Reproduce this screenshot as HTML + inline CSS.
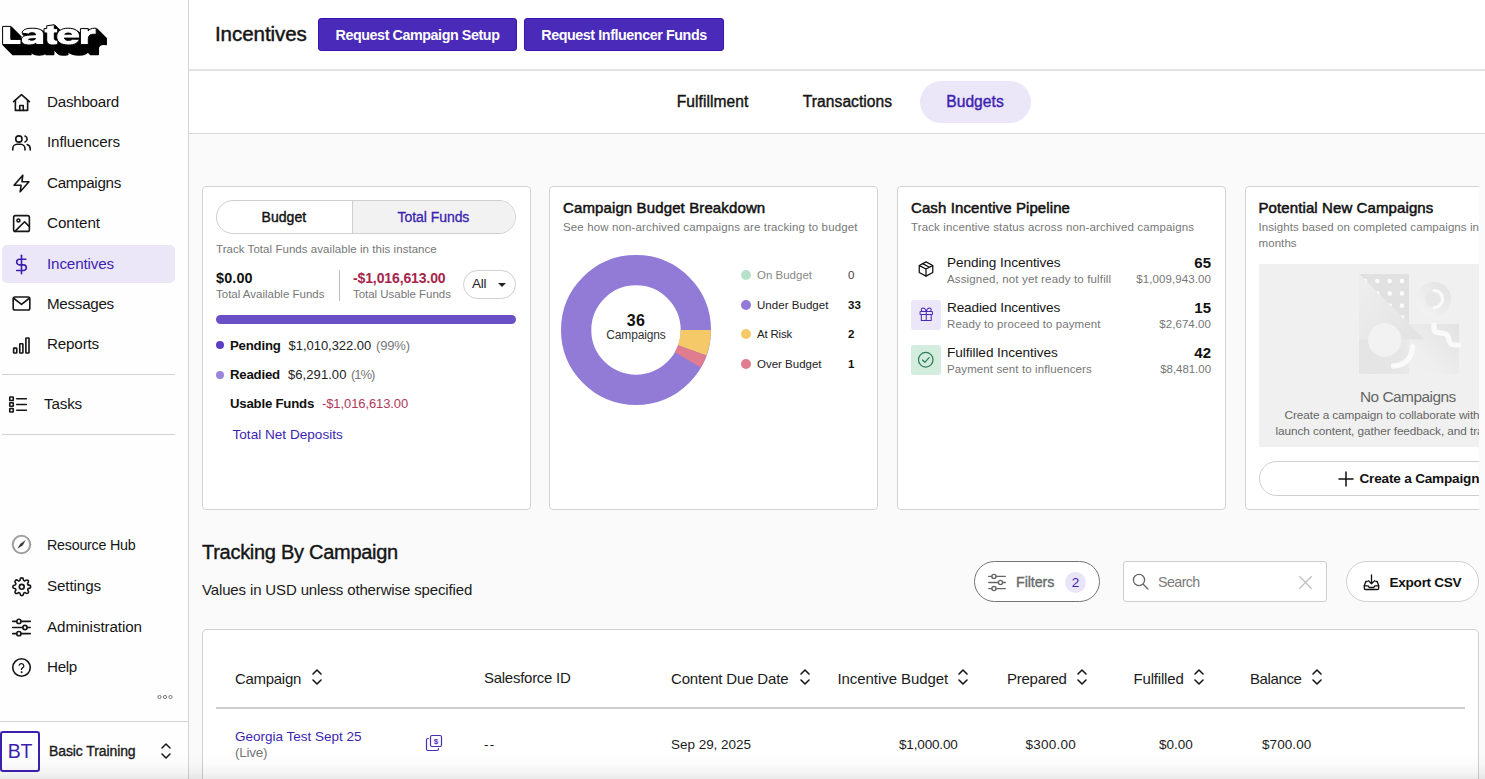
<!DOCTYPE html>
<html lang="en">
<head>
<meta charset="utf-8">
<title>Incentives - Budgets</title>
<style>
*{box-sizing:border-box;margin:0;padding:0}
html,body{width:1485px;height:779px;overflow:hidden;background:#fafafa}
body{font-family:"Liberation Sans",sans-serif;color:#111;position:relative;-webkit-font-smoothing:antialiased}
.abs{position:absolute;white-space:nowrap}
svg{display:block;overflow:visible}
/* sidebar */
#side{position:absolute;left:0;top:0;width:189px;height:779px;background:#fefefe;border-right:1px solid #d4d4d4}
.nav{position:absolute;left:47px;font-size:15.2px;line-height:20px;color:#161616;white-space:nowrap}
.med{-webkit-text-stroke:.35px currentColor}
.ico{position:absolute;left:11px;width:21px;height:21px}
.ico svg{width:21px;height:21px;fill:none;stroke:#161616;stroke-width:1.85;stroke-linecap:round;stroke-linejoin:round}
.hr{position:absolute;left:2px;width:173px;height:1px;background:#d2d2d2}
/* header */
#head{position:absolute;left:189px;top:0;width:1296px;height:69px;background:#fff}
#headline{position:absolute;left:189px;top:69px;width:1296px;height:2px;background:#e2e2e2}
#tabs{position:absolute;left:189px;top:71px;width:1296px;height:62px;background:#fff}
#tabline{position:absolute;left:189px;top:133px;width:1296px;height:1px;background:#d6d6d6}
.btn{position:absolute;top:18px;height:33px;background:#4a2ab9;border:1px solid #3b12b2;border-radius:3px;color:#fff;font-weight:700;font-size:14.3px;line-height:32px;text-align:center;letter-spacing:-.42px}
.tab{position:absolute;top:92px;font-size:15.6px;line-height:20px;color:#151515;letter-spacing:.05px;-webkit-text-stroke:.4px currentColor;transform:translateX(-50%);white-space:nowrap}
/* cards */
.card{position:absolute;top:186px;width:328.5px;height:323.5px;background:#fff;border:1px solid #d3d3d3;border-radius:4px}
.ct{position:absolute;font-size:15px;line-height:18px;color:#111;white-space:nowrap;-webkit-text-stroke:.5px #111}
.cs{position:absolute;font-size:11.5px;line-height:14px;color:#777;white-space:nowrap;letter-spacing:.25px}
.t{position:absolute;white-space:nowrap;line-height:16px}
.t.r{right:489px;text-align:right}
.th{position:absolute;top:669px;font-size:15px;line-height:20px;color:#1b1b1b;white-space:nowrap}
.so{position:absolute;top:667px;width:12px;height:20px;fill:none;stroke:#161616;stroke-width:1.6;stroke-linecap:round;stroke-linejoin:round}
.td{position:absolute;font-size:13.5px;line-height:16px;color:#1b1b1b;white-space:nowrap}
.g{color:#777}
.p{color:#3d1fb0}
</style>
</head>
<body>

<!-- ============ SIDEBAR ============ -->
<div id="side">
  <!-- logo -->
  <div class="abs" id="logo" style="left:0;top:0;width:120px;height:65px">
    <svg width="120" height="65" viewBox="0 0 120 65">
      <defs>
        <g id="lg">
          <path d="M2.6 26.4h8.2v13h10.2v5.2H2.6z"/>
          <path d="M22 33.2c.3-3.4 4-5 10.300-5 7.800 0 11.400 2.300 11.400 6.600v9.800h-7.500l-.3-1.400c-1.600 1.200-4 1.800-7 1.800-4.800 0-7.500-1.700-7.500-4.900 0-3.300 2.700-4.700 8-5l6.200-.4c0-1.300-1.200-1.900-3.500-1.900-2 0-3.100.4-3.500 1.300z"/>
          <path d="M46.700 25.800 54.300 24.700v3.900h3.400v4.300h-3.400v5.600c0 1.300.6 1.700 2 1.700h1.500v4.300c-1.300.3-2.900.5-4.600.5-4.600 0-6.500-1.700-6.500-5.600v-6.500h-2.700v-4.300h2.700z"/>
          <path d="M68.200 28.200c7.300 0 11.500 3.300 11.500 8.600v1.300H64.300c.5 1.500 2 2.300 4.300 2.300 1.700 0 2.900-.4 3.600-1.200h7.200c-1.100 3.700-4.900 5.800-11 5.800-7.400 0-11.700-3.100-11.700-8.400 0-5.200 4.300-8.400 11.500-8.400z"/>
          <path d="M80.400 28.600h7.800v2.300c1.400-1.800 3.500-2.700 6.300-2.700.6 0 1.200 0 1.700.1v6.100c-.8-.1-1.600-.2-2.500-.2-3.500 0-5.400 1.400-5.400 4.300v6.100h-7.900z"/>
        </g>
      </defs>
      <g fill="#000" stroke="#000" stroke-width="1.500" stroke-linejoin="round">
        <use href="#lg" transform="translate(10 10)"/><use href="#lg" transform="translate(9 9)"/><use href="#lg" transform="translate(8 8)"/><use href="#lg" transform="translate(7 7)"/><use href="#lg" transform="translate(6 6)"/><use href="#lg" transform="translate(5 5)"/><use href="#lg" transform="translate(4 4)"/><use href="#lg" transform="translate(3 3)"/><use href="#lg" transform="translate(2 2)"/><use href="#lg" transform="translate(1 1)"/>
      </g>
      <use href="#lg" fill="#fff" stroke="#000" stroke-width="1" stroke-linejoin="round"/>
      <g fill="#000">
        <path d="M28.300 39.600c0-.9.900-1.300 2.700-1.400l4.900-.3v.4c0 1.600-1.800 2.500-4.500 2.500-2 0-3.100-.4-3.100-1.200z"/>
        <path d="M64.200 34.800c.5-1.500 1.900-2.200 4-2.200 2.200 0 3.500.7 3.900 2.200z"/>
      </g>
    </svg>
  </div>

  <div class="ico" style="top:92px"><svg viewBox="0 0 24 24"><path d="M3 11 12 3l9 8"/><path d="M5 9.5V21h14V9.5"/><path d="M10 21v-5.500h4V21"/></svg></div>
  <div class="nav" style="top:92px;letter-spacing:-0.26px">Dashboard</div>

  <div class="ico" style="top:132px"><svg viewBox="0 0 24 24"><circle cx="9" cy="8" r="3.6"/><path d="M2 20.5v-1.5a5 5 0 0 1 5-5h4a5 5 0 0 1 5 5v1.5"/><path d="M16 4.6a3.6 3.6 0 0 1 0 6.8"/><path d="M22 20.5V19a5 5 0 0 0-3.5-4.7"/></svg></div>
  <div class="nav" style="top:132px;letter-spacing:-0.12px">Influencers</div>

  <div class="ico" style="top:173px"><svg viewBox="0 0 24 24"><path d="M13.5 2.5 3.5 14h8l-1 7.5 10-11.5h-8z"/></svg></div>
  <div class="nav" style="top:173px;letter-spacing:-0.32px">Campaigns</div>

  <div class="ico" style="top:213px"><svg viewBox="0 0 24 24"><rect x="3" y="3" width="18" height="18" rx="2"/><circle cx="8.5" cy="8.5" r="1.7"/><path d="M21 15.5 15.5 10 4.5 21"/></svg></div>
  <div class="nav" style="top:213px;letter-spacing:-0.03px">Content</div>

  <div class="abs" style="left:2px;top:245px;width:173px;height:38px;background:#ebe7f8;border-radius:5px"></div>
  <div class="ico" style="top:254px"><svg viewBox="0 0 24 24" style="stroke:#3d1fb0"><path d="M12 1.5v21"/><path d="M17 6H9.7a3.2 3.2 0 0 0 0 6.4h4.6a3.2 3.2 0 0 1 0 6.4H6.5"/></svg></div>
  <div class="nav p" style="top:254px;letter-spacing:-0.14px">Incentives</div>

  <div class="ico" style="top:293px"><svg viewBox="0 0 24 24"><rect x="2.5" y="4.5" width="19" height="15" rx="2"/><path d="m3 6 9 7 9-7"/></svg></div>
  <div class="nav" style="top:294px;letter-spacing:-0.29px">Messages</div>

  <div class="ico" style="top:334.6px"><svg viewBox="0 0 24 24"><rect x="3" y="15" width="3.6" height="5.5" rx=".6"/><rect x="10" y="10" width="3.6" height="10.5" rx=".6"/><rect x="17" y="3.5" width="3.6" height="17" rx=".6"/></svg></div>
  <div class="nav" style="top:334px;letter-spacing:-0.17px">Reports</div>

  <div class="hr" style="top:374px"></div>

  <div class="ico" style="top:394px;left:8px"><svg viewBox="0 0 24 24"><rect x="2" y="3.5" width="4" height="4" rx=".5"/><rect x="2" y="10" width="4" height="4" rx=".5"/><rect x="2" y="16.5" width="4" height="4" rx=".5"/><path d="M10 5.5h11M10 12h11M10 18.5h11"/></svg></div>
  <div class="nav" style="top:394px;left:44px;letter-spacing:-0.16px">Tasks</div>

  <div class="hr" style="top:434px"></div>

  <div class="ico" style="top:534.3px"><svg viewBox="0 0 24 24"><circle cx="12" cy="12" r="9.800" style="stroke:#a4a4a4;stroke-width:2.100"/><circle cx="12" cy="12" r="10.600" style="stroke:#8a8a8a;stroke-width:.6"/><path d="M16.300 7.700 13 13l-5.300 3.300L11 11z" style="fill:#333;stroke:#333;stroke-width:.4"/></svg></div>
  <div class="nav" style="top:535px;font-size:14.3px;letter-spacing:-.25px">Resource Hub</div>

  <div class="ico" style="top:576px"><svg viewBox="0 0 24 24" style="width:19.500px;height:19.500px;margin:.75px;stroke-width:2"><circle cx="12" cy="12" r="3"/><path d="M19.4 15a1.65 1.65 0 0 0 .33 1.82l.06.06a2 2 0 1 1-2.83 2.83l-.06-.06a1.65 1.65 0 0 0-1.82-.33 1.65 1.65 0 0 0-1 1.51V21a2 2 0 1 1-4 0v-.09A1.65 1.65 0 0 0 9 19.4a1.65 1.65 0 0 0-1.82.33l-.06.06a2 2 0 1 1-2.83-2.83l.06-.06a1.65 1.65 0 0 0 .33-1.82 1.65 1.65 0 0 0-1.51-1H3a2 2 0 1 1 0-4h.09A1.65 1.65 0 0 0 4.6 9a1.65 1.65 0 0 0-.33-1.82l-.06-.06a2 2 0 1 1 2.83-2.83l.06.06a1.65 1.65 0 0 0 1.82.33H9a1.65 1.65 0 0 0 1-1.51V3a2 2 0 1 1 4 0v.09a1.65 1.65 0 0 0 1 1.51 1.65 1.65 0 0 0 1.82-.33l.06-.06a2 2 0 1 1 2.83 2.83l-.06.06a1.65 1.65 0 0 0-.33 1.82V9a1.65 1.65 0 0 0 1.51 1H21a2 2 0 1 1 0 4h-.09a1.65 1.65 0 0 0-1.51 1z"/></svg></div>
  <div class="nav" style="top:576px;letter-spacing:-0.11px">Settings</div>

  <div class="ico" style="top:617px"><svg viewBox="0 0 24 24"><path d="M2 5h4.5M11.5 5H22M2 12h11.5M18.500 12H22M2 19h4.5M11.5 19H22"/><circle cx="9" cy="5" r="2.4"/><circle cx="16" cy="12" r="2.4"/><circle cx="9" cy="19" r="2.4"/></svg></div>
  <div class="nav" style="top:617px;letter-spacing:-0.09px">Administration</div>

  <div class="ico" style="top:657px"><svg viewBox="0 0 24 24"><circle cx="12" cy="12" r="10"/><path d="M9.3 9.3a2.8 2.8 0 0 1 5.4.9c0 1.9-2.7 2.4-2.7 4" style="stroke-width:1.5"/><circle cx="12" cy="17.3" r=".6" style="fill:#161616;stroke-width:1"/></svg></div>
  <div class="nav" style="top:657px;letter-spacing:-0.33px">Help</div>

  <div class="abs" style="left:157px;top:694px"><svg width="16" height="6" viewBox="0 0 16 6" fill="none" stroke="#777" stroke-width="1"><circle cx="2.5" cy="3" r="1.6"/><circle cx="8" cy="3" r="1.6"/><circle cx="13.5" cy="3" r="1.6"/></svg></div>

  <div class="abs" style="left:0;top:721px;width:188px;height:1px;background:#d2d2d2"></div>
  <div class="abs" style="left:0;top:731px;width:40px;height:41px;border:2px solid #3d1fb0;border-radius:3px;color:#3d1fb0;font-size:19.5px;line-height:37px;text-align:center;letter-spacing:-.2px">BT</div>
  <div class="abs med" style="left:49px;top:741px;font-size:14px;line-height:20px;color:#1a1a1a;letter-spacing:-.1px">Basic Training</div>
  <div class="abs" style="left:160px;top:741px"><svg width="12" height="20" viewBox="0 0 12 20" fill="none" stroke="#161616" stroke-width="1.5" stroke-linecap="round" stroke-linejoin="round"><path d="M2 7 6 3l4 4M2 13l4 4 4-4"/></svg></div>
</div>

<!-- ============ HEADER ============ -->
<div id="head"></div>
<div id="headline"></div>
<div class="abs" style="left:215px;top:20.7px;font-size:20.6px;line-height:26px;color:#151515;letter-spacing:-.1px;-webkit-text-stroke:.45px #151515">Incentives</div>
<div class="btn" style="left:318px;width:199px">Request Campaign Setup</div>
<div class="btn" style="left:524px;width:200px">Request Influencer Funds</div>

<div id="tabs"></div>
<div id="tabline"></div>
<div class="abs" style="left:920px;top:81px;width:111px;height:42px;background:#ebe7f8;border-radius:21px"></div>
<div class="tab" style="left:712.5px">Fulfillment</div>
<div class="tab" style="left:847.5px">Transactions</div>
<div class="tab p" style="left:975px">Budgets</div>

<div id="cardclip" style="position:absolute;left:189px;top:134px;width:1290px;height:400px;overflow:hidden">
<div style="position:absolute;left:-189px;top:-134px;width:1700px;height:779px">

<!-- card 1 -->
<div class="card" style="left:202px"></div>
<div class="abs" style="left:216px;top:200px;width:300px;height:34px;border:1px solid #cfcfcf;border-radius:17px;background:#fff;overflow:hidden">
  <div style="position:absolute;left:135px;top:0;width:165px;height:34px;background:#f2f2f2;border-left:1px solid #cfcfcf"></div>
</div>
<div class="t med" style="left:261.5px;top:209px;font-size:14px;letter-spacing:.05px;-webkit-text-stroke-width:.4px">Budget</div>
<div class="t med p" style="left:397.5px;top:209px;font-size:14px;letter-spacing:-.05px;-webkit-text-stroke-width:.3px">Total Funds</div>
<div class="t g" style="left:216px;top:241px;font-size:11.5px;letter-spacing:.05px">Track Total Funds available in this instance</div>
<div class="t" style="left:216px;top:269.5px;font-size:14.4px;font-weight:700;letter-spacing:.15px">$0.00</div>
<div class="t g" style="left:216px;top:286px;font-size:11.5px">Total Available Funds</div>
<div class="abs" style="left:339px;top:270px;width:1px;height:31px;background:#bdbdbd"></div>
<div class="t" style="left:353px;top:269.5px;font-size:14px;font-weight:700;letter-spacing:-.12px;color:#a5254b">-$1,016,613.00</div>
<div class="t g" style="left:353px;top:286px;font-size:11.5px;letter-spacing:-.03px">Total Usable Funds</div>
<div class="abs" style="left:462.500px;top:270px;width:53.5px;height:28.5px;border:1px solid #cfcfcf;border-radius:15px;background:#fff"></div>
<div class="t" style="left:472px;top:276px;font-size:13.500px;letter-spacing:-.3px;color:#222">All</div>
<div class="abs" style="left:497.500px;top:282.500px;width:0;height:0;border-left:4px solid transparent;border-right:4px solid transparent;border-top:4.500px solid #222"></div>
<div class="abs" style="left:216px;top:315px;width:300px;height:9px;border-radius:5px;background:#6b4fc6"></div>
<div class="abs" style="left:216px;top:341.3px;width:8px;height:8px;border-radius:50%;background:#5b3ec4"></div>
<div class="t" style="left:230px;top:337.6px;font-size:13.2px;font-weight:700;letter-spacing:-.2px">Pending</div>
<div class="t" style="left:288.500px;top:337.6px;font-size:13px;letter-spacing:-.03px;color:#222">$1,010,322.00</div>
<div class="t g" style="left:376px;top:337.6px;font-size:13px;letter-spacing:-.15px">(99%)</div>
<div class="abs" style="left:216px;top:370.5px;width:8px;height:8px;border-radius:50%;background:#9a85dc"></div>
<div class="t" style="left:230px;top:366.9px;font-size:13.2px;font-weight:700;letter-spacing:-.2px">Readied</div>
<div class="t" style="left:288px;top:366.9px;font-size:13px;letter-spacing:.07px;color:#222">$6,291.00</div>
<div class="t g" style="left:351px;top:366.9px;font-size:13px;letter-spacing:-1px">(1%)</div>
<div class="t" style="left:230px;top:396.2px;font-size:13.2px;font-weight:700;letter-spacing:-.2px">Usable Funds</div>
<div class="t" style="left:322px;top:396.2px;font-size:13px;letter-spacing:-.1px;color:#b0395b">-$1,016,613.00</div>
<div class="t p" style="left:232.500px;top:426.8px;font-size:13.6px;letter-spacing:0">Total Net Deposits</div>

<!-- card 2 -->
<div class="card" style="left:549px"></div>
<div class="ct" style="left:563px;top:199px;letter-spacing:.12px">Campaign Budget Breakdown</div>
<div class="t g" style="left:563px;top:219px;font-size:11.5px;letter-spacing:.13px">See how non-archived campaigns are tracking to budget</div>
<svg class="abs" style="left:556px;top:249.8px" width="160" height="160" viewBox="-80 -80 160 160">
  <circle r="59.85" fill="none" stroke="#917bd7" stroke-width="30.3"/>
  <path d="M74.9 0A74.9 74.9 0 0 1 70.380 25.620L42 15.290A44.700 44.700 0 0 0 44.700 0z" fill="#f6c968"/>
  <path d="M70.380 25.620A74.900 74.900 0 0 1 64.870 37.450L38.710 22.350A44.700 44.700 0 0 0 42 15.290z" fill="#e07c8f"/>
</svg>
<div class="t" style="left:586px;top:313.3px;width:100px;text-align:center;font-size:16px;font-weight:700;letter-spacing:.3px">36</div>
<div class="t" style="left:586px;top:327.3px;width:100px;text-align:center;font-size:12px;letter-spacing:-.15px;color:#333">Campaigns</div>
<div class="abs" style="left:740.500px;top:270px;width:10px;height:10px;border-radius:50%;background:#b6e0c9"></div>
<div class="abs" style="left:740.500px;top:299.7px;width:10px;height:10px;border-radius:50%;background:#917bd7"></div>
<div class="abs" style="left:740.500px;top:329.2px;width:10px;height:10px;border-radius:50%;background:#f6c968"></div>
<div class="abs" style="left:740.500px;top:359px;width:10px;height:10px;border-radius:50%;background:#e07c8f"></div>
<div class="t" style="left:757px;top:267px;font-size:11.5px;color:#888">On Budget</div>
<div class="t" style="left:757px;top:296.7px;font-size:11.5px;letter-spacing:.04px;color:#222">Under Budget</div>
<div class="t" style="left:757px;top:326.2px;font-size:11.5px;letter-spacing:-.2px;color:#222">At Risk</div>
<div class="t" style="left:757px;top:356px;font-size:11.5px;color:#222">Over Budget</div>
<div class="t" style="left:848px;top:267px;font-size:11.5px;color:#444">0</div>
<div class="t" style="left:848px;top:296.7px;font-size:11.5px;font-weight:700">33</div>
<div class="t" style="left:848px;top:326.2px;font-size:11.5px;font-weight:700">2</div>
<div class="t" style="left:848px;top:356px;font-size:11.5px;font-weight:700">1</div>

<!-- card 3 -->
<div class="card" style="left:897px"></div>
<div class="ct" style="left:911px;top:199px;letter-spacing:.1px">Cash Incentive Pipeline</div>
<div class="t g" style="left:911px;top:219px;font-size:11.5px;letter-spacing:.13px">Track incentive status across non-archived campaigns</div>

<svg class="abs" style="left:916.8px;top:259.8px" width="18" height="18" viewBox="0 0 24 24" fill="none" stroke="#111" stroke-width="1.7" stroke-linejoin="round" stroke-linecap="round"><path d="M12 2.500 3 7.300v9.400l9 4.800 9-4.800V7.300z"/><path d="M3.300 7.500 12 12l8.700-4.500M12 12v9.300M7.500 4.900l9 4.800"/></svg>
<div class="t" style="left:947px;top:254.500px;font-size:13.6px;letter-spacing:-.08px;color:#161616">Pending Incentives</div>
<div class="t g" style="left:947px;top:271px;font-size:11.5px;letter-spacing:.15px">Assigned, not yet ready to fulfill</div>
<div class="t r" style="top:254.500px;font-size:15px;font-weight:700">65</div>
<div class="t r g" style="top:271px;font-size:11.5px;letter-spacing:.1px">$1,009,943.00</div>

<div class="abs" style="left:911px;top:299.5px;width:30px;height:30px;border-radius:3px;background:#ebe7f8"></div>
<svg class="abs" style="left:917.7px;top:306.3px" width="16.500" height="16.500" viewBox="0 0 24 24" fill="none" stroke="#4a2bb8" stroke-width="1.5" stroke-linejoin="round" stroke-linecap="round"><rect x="3" y="8" width="18" height="4.500" rx=".8"/><path d="M4.800 12.500V21h14.400v-8.500M12 8v13"/><path d="M12 8c-1-3.500-3-5-4.700-5a2.300 2.300 0 0 0 0 5zM12 8c1-3.500 3-5 4.700-5a2.300 2.300 0 0 1 0 5z"/></svg>
<div class="t" style="left:947px;top:299.500px;font-size:13.6px;letter-spacing:-.14px;color:#161616">Readied Incentives</div>
<div class="t g" style="left:947px;top:316px;font-size:11.5px;letter-spacing:.1px">Ready to proceed to payment</div>
<div class="t r" style="top:299.500px;font-size:15px;font-weight:700">15</div>
<div class="t r g" style="top:316px;font-size:11.5px;letter-spacing:.06px">$2,674.00</div>

<div class="abs" style="left:911px;top:344.5px;width:30px;height:30px;border-radius:3px;background:#d3ecde"></div>
<svg class="abs" style="left:917px;top:350.8px" width="17.500" height="17.500" viewBox="0 0 24 24" fill="none" stroke="#2f7d5a" stroke-width="1.700" stroke-linejoin="round" stroke-linecap="round"><circle cx="12" cy="12" r="10"/><path d="m7.500 12.300 3.200 3.200 5.800-6.500"/></svg>
<div class="t" style="left:947px;top:344.500px;font-size:13.6px;letter-spacing:-.05px;color:#161616">Fulfilled Incentives</div>
<div class="t g" style="left:947px;top:361px;font-size:11.5px;letter-spacing:.11px">Payment sent to influencers</div>
<div class="t r" style="top:344.500px;font-size:15px;font-weight:700">42</div>
<div class="t r g" style="top:361px;font-size:11.5px;letter-spacing:-.04px">$8,481.00</div>

<!-- card 4 -->
<div class="card" style="left:1245px"></div>
<div class="ct" style="left:1258.500px;top:199px;letter-spacing:.1px">Potential New Campaigns</div>
<div class="t g" style="left:1258.500px;top:219px;font-size:11.5px;letter-spacing:.08px">Insights based on completed campaigns in the last 6</div>
<div class="t g" style="left:1258.500px;top:235px;font-size:11.5px;letter-spacing:.08px">months</div>
<div class="abs" style="left:1258.500px;top:264px;width:301px;height:183px;background:#f0f0f0"></div>
<svg class="abs" style="left:1358.500px;top:274px" width="100" height="100" viewBox="0 0 100 100">
  <defs>
    <linearGradient id="ig1" gradientUnits="userSpaceOnUse" x1="0" y1="20" x2="60" y2="66"><stop offset="0" stop-color="#ededed"/><stop offset="1" stop-color="#e2e2e2"/></linearGradient>
    <linearGradient id="ig2" x1="1" y1="0" x2="0" y2="1"><stop offset="0" stop-color="#e2e2e2"/><stop offset=".7" stop-color="#efefef"/><stop offset="1" stop-color="#f0f0f0"/></linearGradient>
    <linearGradient id="ig3" x1="1" y1="0" x2="0" y2="1"><stop offset="0" stop-color="#e1e1e1"/><stop offset="1" stop-color="#f5f5f5"/></linearGradient>
    <linearGradient id="ig4" x1="0" y1="0" x2="1" y2="0"><stop offset="0" stop-color="#e4e4e4"/><stop offset=".6" stop-color="#e6e6e6"/><stop offset="1" stop-color="#eeeeee"/></linearGradient>
    <clipPath id="tri"><path d="M0 0h50v50z"/></clipPath>
  </defs>
  <rect x="0" y="65" width="64" height="35" fill="url(#ig4)"/>
  <rect x="50" y="50" width="50" height="50" fill="url(#ig2)"/>
  <path d="M0 0h50v50z" fill="#e1e1e1"/>
  <path d="M0 0l65.500 65.500H0z" fill="url(#ig1)"/>
  <circle cx="75" cy="25" r="17" fill="url(#ig3)"/>
  <circle cx="75" cy="25" r="8.500" fill="#e7e7e7"/>
  <path d="M75 16.500a8.500 8.500 0 0 1 0 17" fill="none" stroke="#fafafa" stroke-width="3.200" stroke-linecap="round"/>
  <circle cx="25.700" cy="66" r="16.700" fill="#f2f2f2"/>
  <g fill="#fbfbfb" clip-path="url(#tri)"><circle cx="6" cy="7" r="2.300"/><circle cx="18.300" cy="7" r="2.300"/><circle cx="30.700" cy="7" r="2.300"/><circle cx="43" cy="7" r="2.300"/><circle cx="18.300" cy="19.400" r="2.300"/><circle cx="30.700" cy="19.400" r="2.300"/><circle cx="43" cy="19.400" r="2.300"/><circle cx="30.700" cy="31.700" r="2.300"/><circle cx="43" cy="31.700" r="2.300"/><circle cx="43" cy="43.500" r="2.300"/></g>
  <path d="M34.500 92c10 0 18.500-7 19-19" fill="none" stroke="#fafafa" stroke-width="5.300" stroke-linecap="round"/>
  <path d="M75 51v3c0 9 13 1 14.500 10 1 8 6 7.500 10.500 7" fill="none" stroke="#fafafa" stroke-width="5.200" stroke-linecap="round"/>
</svg>
<div class="t" style="left:1360px;top:387.500px;font-size:15.4px;letter-spacing:-.5px;color:#666;line-height:18px">No Campaigns</div>
<div class="t" style="left:1284.500px;top:407px;font-size:11.8px;letter-spacing:-.08px;color:#666">Create a campaign to collaborate with influencers,</div>
<div class="t" style="left:1275.500px;top:423px;font-size:11.8px;letter-spacing:-.08px;color:#666">launch content, gather feedback, and track results.</div>
<div class="abs" style="left:1258.500px;top:461px;width:301px;height:34.5px;border:1px solid #cfcfcf;border-radius:18px;background:#fff"></div>
<svg class="abs" style="left:1337.500px;top:470.500px" width="16" height="16" viewBox="0 0 16 16" fill="none" stroke="#111" stroke-width="1.500" stroke-linecap="round"><path d="M8 1v14M1 8h14"/></svg>
<div class="t" style="left:1359.500px;top:470.500px;font-size:13.6px;font-weight:700;letter-spacing:-.2px">Create a Campaign</div>

</div></div>

<!--CARDS_END-->

<div class="abs" style="left:202px;top:539.4px;font-size:20px;line-height:26px;color:#151515;letter-spacing:-.28px;-webkit-text-stroke:.4px #151515">Tracking By Campaign</div>
<div class="abs" style="left:202px;top:579.9px;font-size:15px;line-height:20px;color:#1b1b1b;letter-spacing:-.14px">Values in USD unless otherwise specified</div>

<!-- filters -->
<div class="abs" style="left:973.500px;top:561.2px;width:126.500px;height:41.2px;border:1px solid #747474;border-radius:21px;background:#fff"></div>
<svg class="abs" style="left:987px;top:571.6px" width="20" height="21" viewBox="0 0 23 24" fill="none" stroke="#666" stroke-width="1.600" stroke-linecap="round"><path d="M2 5h3.500M10.500 5H21M2 12h11M18 12H21M2 19h3.500M10.500 19H21"/><circle cx="8" cy="5" r="2.400"/><circle cx="15.500" cy="12" r="2.400"/><circle cx="8" cy="19" r="2.400"/></svg>
<div class="abs med" style="left:1016px;top:572.3px;font-size:14.3px;line-height:20px;color:#6a6a6a;letter-spacing:-.08px">Filters</div>
<div class="abs" style="left:1065px;top:571.5px;width:21px;height:21px;border-radius:50%;background:#e9e4f8;color:#3d1fb0;font-size:13.5px;line-height:21px;text-align:center">2</div>

<!-- search -->
<div class="abs" style="left:1123px;top:561.2px;width:203.500px;height:41.2px;border:1px solid #cdcdcd;border-radius:3px;background:#fff"></div>
<svg class="abs" style="left:1132px;top:573px" width="17" height="17" viewBox="0 0 17 17" fill="none" stroke="#666" stroke-width="1.300" stroke-linecap="round"><circle cx="7" cy="7" r="5.600"/><path d="m11.200 11.200 4.800 4.800"/></svg>
<div class="abs" style="left:1158px;top:572.3px;font-size:14.3px;line-height:20px;color:#7b7b7b;letter-spacing:-.6px">Search</div>
<svg class="abs" style="left:1299px;top:575.500px" width="13" height="13" viewBox="0 0 13 13" fill="none" stroke="#c2c2c2" stroke-width="1.400" stroke-linecap="round"><path d="M.8.8l11.400 11.400M12.200.8.800 12.200"/></svg>

<!-- export -->
<div class="abs" style="left:1346px;top:561.2px;width:133px;height:41.2px;border:1px solid #cfcfcf;border-radius:21px;background:#fff"></div>
<svg class="abs" style="left:1363px;top:573.500px" width="17" height="17" viewBox="0 0 17 17" fill="none" stroke="#111" stroke-width="1.300" stroke-linecap="round" stroke-linejoin="round"><path d="M8.500 1v8.500M5.300 6.600l3.200 3.200 3.200-3.200"/><path d="M4.200 7.500H2.800L1.300 11.800v2.400a1.300 1.300 0 0 0 1.300 1.300h11.800a1.300 1.300 0 0 0 1.300-1.300v-2.400L14.200 7.500h-1.400"/><path d="M1.300 11.800h3.900l1 1.700h4.600l1-1.700h3.900"/></svg>
<div class="abs" style="left:1389.6px;top:572.5px;font-size:13.6px;line-height:20px;font-weight:700;color:#111;letter-spacing:-.3px">Export CSV</div>

<!-- table -->
<div class="abs" style="left:202px;top:629px;width:1277px;height:170px;border:1px solid #d0d0d0;border-radius:5px;background:#fff"></div>
<div class="th" style="left:235px;letter-spacing:-.3px">Campaign</div>
<div class="th" style="left:484px;top:667.500px;letter-spacing:-.27px">Salesforce ID</div>
<div class="th" style="left:671px;letter-spacing:-.17px">Content Due Date</div>
<div class="th" style="left:837.500px;letter-spacing:-.07px">Incentive Budget</div>
<div class="th" style="left:1007px;letter-spacing:-.26px">Prepared</div>
<div class="th" style="left:1133.500px;letter-spacing:-.18px">Fulfilled</div>
<div class="th" style="left:1250px;letter-spacing:-.39px">Balance</div>
<svg class="so" style="left:311px"  viewBox="0 0 12 20"><path d="M2 7 6 3l4 4M2 13l4 4 4-4"/></svg>
<svg class="so" style="left:798.500px"  viewBox="0 0 12 20"><path d="M2 7 6 3l4 4M2 13l4 4 4-4"/></svg>
<svg class="so" style="left:957px"  viewBox="0 0 12 20"><path d="M2 7 6 3l4 4M2 13l4 4 4-4"/></svg>
<svg class="so" style="left:1076px" viewBox="0 0 12 20"><path d="M2 7 6 3l4 4M2 13l4 4 4-4"/></svg>
<svg class="so" style="left:1193px" viewBox="0 0 12 20"><path d="M2 7 6 3l4 4M2 13l4 4 4-4"/></svg>
<svg class="so" style="left:1311px" viewBox="0 0 12 20"><path d="M2 7 6 3l4 4M2 13l4 4 4-4"/></svg>
<div class="abs" style="left:216px;top:707px;width:1249px;height:2px;background:#cdcdcd"></div>

<div class="td p" style="left:235px;top:728.8px">Georgia Test Sept 25</div>
<div class="td g" style="left:235px;top:744.8px;letter-spacing:-.25px">(Live)</div>
<svg class="abs" style="left:425px;top:734px" width="18" height="18" viewBox="0 0 18 18" fill="none" stroke="#4a2bb8" stroke-width="1.200" stroke-linejoin="round" stroke-linecap="round"><rect x="5.500" y="1.500" width="11" height="11" rx="1.500"/><path d="M3.500 4.500h-.5a1.500 1.500 0 0 0-1.500 1.500v9a1.500 1.500 0 0 0 1.500 1.500h9a1.500 1.500 0 0 0 1.500-1.500v-.5"/><text x="11" y="9.800" text-anchor="middle" font-family="Liberation Sans, sans-serif" font-weight="700" font-size="8" fill="#4a2bb8" stroke="none">$</text></svg>
<div class="td" style="left:484px;top:736.8px;letter-spacing:1.3px">--</div>
<div class="td" style="left:671px;top:736.8px;letter-spacing:-.03px">Sep 29, 2025</div>
<div class="td" style="left:899px;top:736.8px;letter-spacing:-.16px">$1,000.00</div>
<div class="td" style="left:1025.500px;top:736.8px;letter-spacing:.26px">$300.00</div>
<div class="td" style="left:1159px;top:736.8px">$0.00</div>
<div class="td" style="left:1262px;top:736.8px;letter-spacing:.07px">$700.00</div>

<!--TABLE_END-->

<div class="abs" style="left:0;top:746px;width:1485px;height:33px;background:linear-gradient(to bottom,rgba(0,0,0,0),rgba(0,0,0,.004) 30%,rgba(0,0,0,.016) 55%,rgba(0,0,0,.042) 80%,rgba(0,0,0,.085));pointer-events:none"></div>

</body>
</html>
